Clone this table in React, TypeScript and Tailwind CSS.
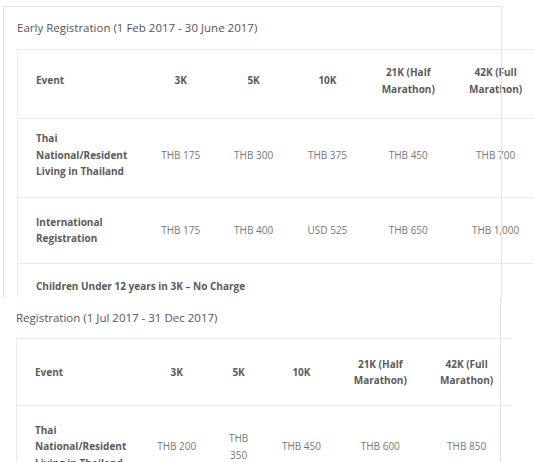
import React from "react";

type Row = { h: number; pb?: number; cells: string[]; full?: string };

function Table({
  widths,
  header,
  headerH,
  headerPb,
  rows,
  narrowCol,
}: {
  widths: number[];
  header: string[][];
  headerH: number;
  headerPb: number;
  rows: Row[];
  narrowCol?: number;
}) {
  const total = widths.reduce((a, b) => a + b, 0);
  return (
    <div className="border-l border-t border-[#ececec]" style={{ width: total }}>
      <div className="flex border-b border-[#ececec]" style={{ height: headerH, paddingBottom: headerPb }}>
        {header.map((lines, i) => (
          <div
            key={i}
            className={`flex flex-col justify-center text-[10px] leading-[16.5px] font-bold text-[#5a5a5a] ${
              i === 0 ? "items-start pl-[18px]" : "items-center text-center"
            }`}
            style={{ width: widths[i] }}
          >
            {lines.map((l, j) => (
              <span key={j} className="whitespace-nowrap">
                {l}
              </span>
            ))}
          </div>
        ))}
      </div>
      {rows.map((r, ri) => (
        <div
          key={ri}
          className="flex border-b border-[#ececec]"
          style={{ height: r.h, paddingBottom: r.pb ?? 0 }}
        >
          {r.full ? (
            <div className="flex items-center pl-[18px] text-[10px] leading-[16.5px] font-bold text-[#5a5a5a] whitespace-nowrap">
              {r.full}
            </div>
          ) : (
            r.cells.map((c, i) => (
              <div
                key={i}
                className={`flex flex-col justify-center text-[10px] leading-[16.5px] ${
                  i === 0
                    ? "items-start pl-[18px] font-bold text-[#5a5a5a]"
                    : "items-center text-center text-[#777]"
                }`}
                style={{ width: widths[i] }}
              >
                {i === 0 ? (
                  c.split("\n").map((l, j) => (
                    <span key={j} className="whitespace-nowrap">
                      {l}
                    </span>
                  ))
                ) : narrowCol === i ? (
                  <span className="max-w-[30px]">{c}</span>
                ) : (
                  <span className="whitespace-nowrap">{c}</span>
                )}
              </div>
            ))
          )}
        </div>
      ))}
    </div>
  );
}

const header = [
  ["Event"],
  ["3K"],
  ["5K"],
  ["10K"],
  ["21K (Half", "Marathon)"],
  ["42K (Full", "Marathon)"],
];

export default function App() {
  return (
    <div className="w-[534px] h-[462px] overflow-hidden bg-white font-['Open_Sans',sans-serif]">
      {/* Section 1 */}
      <div className="relative h-[298px] overflow-hidden">
        <div className="pt-[20px] pl-[17px]">
          <div className="text-[11.5px] leading-[16px] text-[#555] whitespace-nowrap">
            Early Registration (1 Feb 2017 - 30 June 2017)
          </div>
          <div className="mt-[13px]">
            <Table
              widths={[126, 74, 72, 76, 86, 89]}
              header={header}
              headerH={69}
              headerPb={7}
              rows={[
                {
                  h: 79,
                  pb: 6,
                  cells: [
                    "Thai\nNational/Resident\nLiving in Thailand",
                    "THB 175",
                    "THB 300",
                    "THB 375",
                    "THB 450",
                    "THB 700",
                  ],
                },
                {
                  h: 66,
                  pb: 1,
                  cells: [
                    "International\nRegistration",
                    "THB 175",
                    "THB 400",
                    "USD 525",
                    "THB 650",
                    "THB 1,000",
                  ],
                },
                { h: 50, pb: 4, cells: [], full: "Children Under 12 years in 3K – No Charge" },
              ]}
            />
          </div>
        </div>
        <div className="pointer-events-none absolute left-[3px] top-[6px] w-[499px] h-[400px] border border-[#e4e4e4]" />
      </div>

      {/* Section 2 */}
      <div className="relative h-[164px] overflow-hidden">
        <div className="pt-[12px] pl-[16px]">
          <div className="text-[11.5px] leading-[16px] text-[#555] whitespace-nowrap">
            Registration (1 Jul 2017 - 31 Dec 2017)
          </div>
          <div className="mt-[12px]">
            <Table
              widths={[124, 72, 52, 74, 84, 89]}
              header={header}
              headerH={67}
              headerPb={0}
              narrowCol={2}
              rows={[
                {
                  h: 84,
                  pb: 2,
                  cells: [
                    "Thai\nNational/Resident\nLiving in Thailand",
                    "THB 200",
                    "THB 350",
                    "THB 450",
                    "THB 600",
                    "THB 850",
                  ],
                },
              ]}
            />
          </div>
        </div>
        <div className="pointer-events-none absolute left-[-10px] top-[-2px] w-[511px] h-[400px] border border-[#e4e4e4]" />
      </div>
    </div>
  );
}
